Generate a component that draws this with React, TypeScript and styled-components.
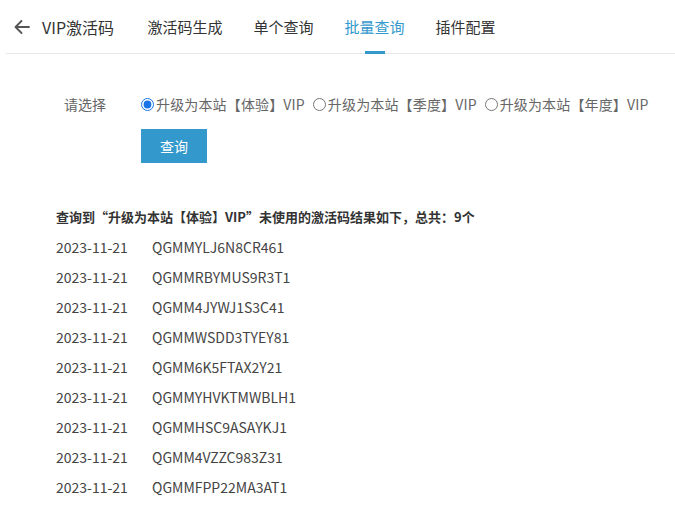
import { useState } from "react";
import styled, { createGlobalStyle } from "styled-components";

const GlobalStyle = createGlobalStyle`
  body {
    margin: 0;
    background: #fff;
    font-family: "Noto Sans CJK SC", "Noto Sans", sans-serif;
    color: #333;
  }
`;

const Page = styled.div`
  width: 675px;
  height: 524px;
  overflow: hidden;
`;

const Header = styled.div`
  display: flex;
  align-items: center;
  height: 53px;
  margin-left: 6px;
  padding-left: 7px;
  border-bottom: 1px solid #e8e8e8;
`;

const Back = styled.span`
  display: flex;
  align-items: center;
  width: 18px;
  height: 18px;
  margin-right: 11px;
  margin-top: 1px;
  color: #555;
`;

const HeaderTitle = styled.div`
  font-size: 16px;
  color: #333;
  margin-right: 18px;
`;

const Tab = styled.div<{ $active?: boolean }>`
  position: relative;
  height: 53px;
  line-height: 53px;
  padding: 0 15.5px;
  font-size: 15px;
  color: ${(p) => (p.$active ? "#3399cc" : "#333")};
  cursor: pointer;

  &::after {
    content: "";
    display: ${(p) => (p.$active ? "block" : "none")};
    position: absolute;
    left: 50%;
    bottom: -1px;
    width: 20px;
    margin-left: -10px;
    height: 3px;
    background: #3399cc;
  }
`;

const Form = styled.div`
  padding: 40px 0 0 64px;
`;

const FormRow = styled.div`
  display: flex;
  align-items: center;
  height: 20px;
`;

const Label = styled.div`
  width: 77px;
  font-size: 14px;
  color: #666;
`;

const Option = styled.label`
  display: flex;
  align-items: center;
  font-size: 14px;
  letter-spacing: 0.15px;
  color: #666;
  margin-right: 8px;
  cursor: pointer;

  input {
    width: 13px;
    height: 13px;
    margin: 0 2px 0 0;
    accent-color: #1a73e8;
  }
`;

const Button = styled.button`
  display: block;
  margin: 15px 0 0 77px;
  width: 66px;
  height: 34px;
  border: none;
  background: #3399cc;
  color: #fff;
  font-family: inherit;
  font-size: 14px;
  cursor: pointer;
`;

const Result = styled.div`
  padding: 44px 0 0 56px;
`;

const ResultTitle = styled.div`
  font-size: 13px;
  font-weight: bold;
  color: #333;
  height: 20px;
  line-height: 20px;
  margin-bottom: 10px;
`;

const Row = styled.div`
  display: flex;
  height: 30px;
  line-height: 20px;
  font-size: 14px;
  color: #444;
`;

const DateCell = styled.div`
  width: 96px;
`;

const options = ["升级为本站【体验】VIP", "升级为本站【季度】VIP", "升级为本站【年度】VIP"];

const codes = [
  "QGMMYLJ6N8CR461",
  "QGMMRBYMUS9R3T1",
  "QGMM4JYWJ1S3C41",
  "QGMMWSDD3TYEY81",
  "QGMM6K5FTAX2Y21",
  "QGMMYHVKTMWBLH1",
  "QGMMHSC9ASAYKJ1",
  "QGMM4VZZC983Z31",
  "QGMMFPP22MA3AT1",
];

const App = () => {
  const [sel, setSel] = useState(0);
  const tabs = ["激活码生成", "单个查询", "批量查询", "插件配置"];
  return (
    <Page>
      <GlobalStyle />
      <Header>
        <Back>
          <svg width="18" height="18" viewBox="0 0 18 18" fill="none" stroke="currentColor" strokeWidth="1.8" strokeLinecap="round" strokeLinejoin="round">
            <path d="M16 9H2.5M8.5 3L2.5 9l6 6" />
          </svg>
        </Back>
        <HeaderTitle>VIP激活码</HeaderTitle>
        {tabs.map((t, i) => (
          <Tab key={t} $active={i === 2}>{t}</Tab>
        ))}
      </Header>
      <Form>
        <FormRow>
          <Label>请选择</Label>
          {options.map((o, i) => (
            <Option key={o}>
              <input type="radio" name="vip" checked={sel === i} onChange={() => setSel(i)} />
              {o}
            </Option>
          ))}
        </FormRow>
        <Button>查询</Button>
      </Form>
      <Result>
        <ResultTitle>查询到“升级为本站【体验】VIP”未使用的激活码结果如下，总共：9个</ResultTitle>
        {codes.map((c) => (
          <Row key={c}>
            <DateCell>2023-11-21</DateCell>
            <div>{c}</div>
          </Row>
        ))}
      </Result>
    </Page>
  );
};

export default App;
